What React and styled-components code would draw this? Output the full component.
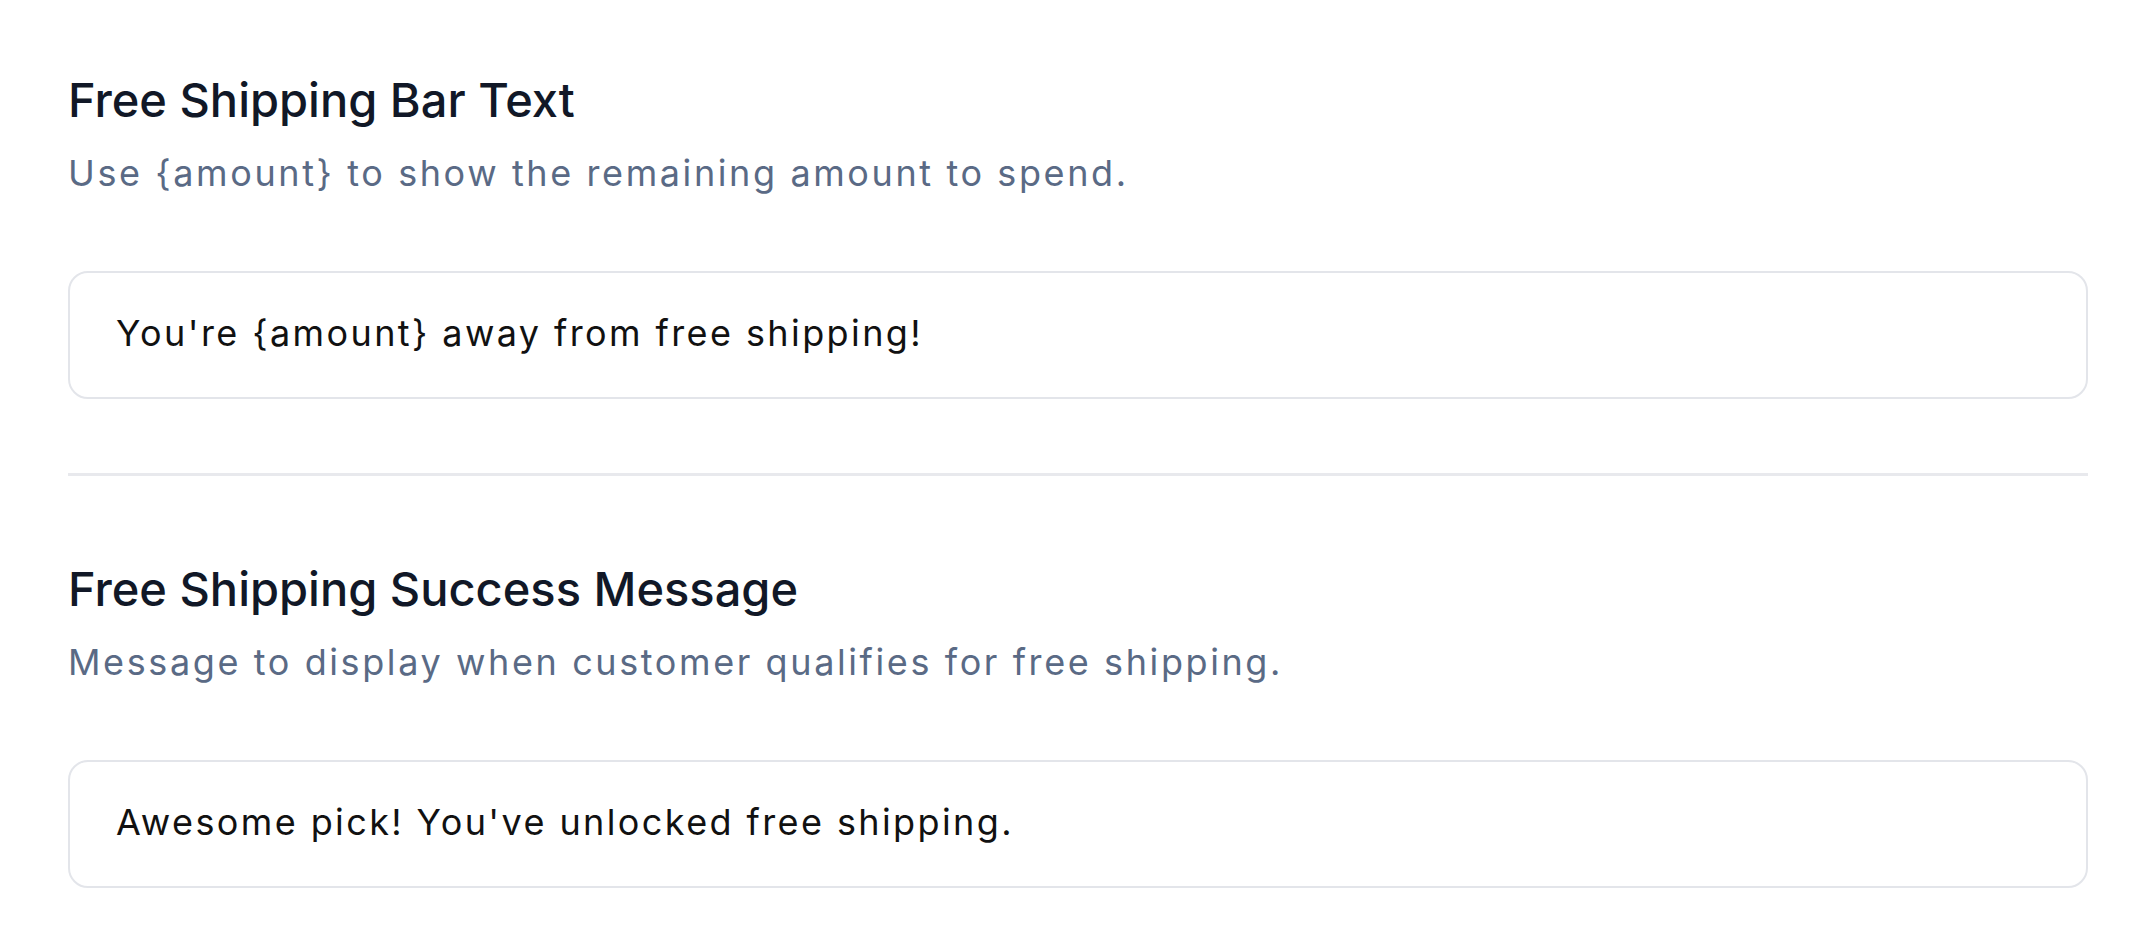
import React from 'react';
import styled, { createGlobalStyle } from 'styled-components';

const GlobalStyle = createGlobalStyle`
  html, body {
    margin: 0;
    padding: 0;
    background: #ffffff;
  }
  body {
    font-family: Inter, 'Noto Sans', sans-serif;
    -webkit-font-smoothing: antialiased;
  }
`;

const Page = styled.main`
  display: flex;
  flex-direction: column;
  padding: 70px 54px 0 68px;
`;

const Section = styled.section`
  display: flex;
  flex-direction: column;
`;

const Title = styled.h2`
  margin: 0;
  font-size: 47px;
  line-height: 60px;
  font-weight: 500;
  color: #111827;
`;

const Hint = styled.p`
  margin: 21px 0 0;
  font-size: 36px;
  line-height: 44px;
  font-weight: 400;
  letter-spacing: 2.6px;
  color: #5a6a85;
`;

const Field = styled.input`
  margin-top: 76px;
  box-sizing: border-box;
  width: 100%;
  height: 128px;
  padding: 0 46px 4px;
  border: 2px solid #e3e5ea;
  border-radius: 20px;
  background: #fff;
  font-family: inherit;
  font-size: 36px;
  letter-spacing: 2.4px;
  color: #111111;
  outline: none;
`;

const Divider = styled.hr`
  margin: 74px 0 83px;
  border: 0;
  height: 3px;
  background: #e8e9ed;
`;

function SettingBlock({ title, hint, value }) {
  return (
    <Section>
      <Title>{title}</Title>
      <Hint>{hint}</Hint>
      <Field defaultValue={value} />
    </Section>
  );
}

export default function App() {
  return (
    <>
      <GlobalStyle />
      <Page>
        <SettingBlock
          title="Free Shipping Bar Text"
          hint="Use {amount} to show the remaining amount to spend."
          value="You're {amount} away from free shipping!"
        />
        <Divider />
        <SettingBlock
          title="Free Shipping Success Message"
          hint="Message to display when customer qualifies for free shipping."
          value="Awesome pick! You've unlocked free shipping."
        />
      </Page>
    </>
  );
}
